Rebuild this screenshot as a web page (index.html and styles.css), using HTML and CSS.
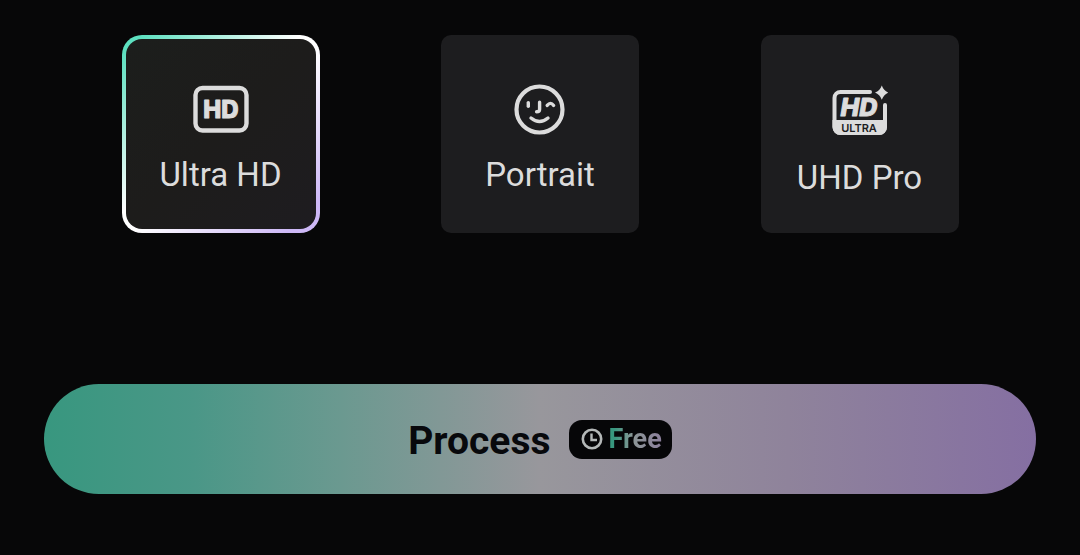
FILE: index.html
```html
<!DOCTYPE html>
<html lang="en">
<head>
    <meta charset="UTF-8">
    <meta name="viewport" content="width=device-width, initial-scale=1.0">
    <title>Enhance photo</title>
    <link rel="stylesheet" href="styles.css">
</head>
<body>
    <main class="panel">
        <div class="modes" role="group" aria-label="Enhance mode">
            <button class="mode selected" type="button" aria-pressed="true">
                <svg class="mode-icon" width="56" height="56" viewBox="0 0 56 56" aria-hidden="true">
                    <rect x="2.5" y="7" width="51" height="42.5" rx="7" fill="none" stroke="currentColor" stroke-width="4.4"/>
                    <text class="hd-text" x="28" y="37" text-anchor="middle">HD</text>
                </svg>
                <span class="mode-label">Ultra HD</span>
            </button>

            <button class="mode" type="button" aria-pressed="false">
                <svg class="mode-icon" width="56" height="56" viewBox="0 0 56 56" fill="none" stroke="currentColor" stroke-linecap="round" aria-hidden="true">
                    <circle cx="27.5" cy="28.5" r="23" stroke-width="4.2"/>
                    <g stroke-width="3.4">
                        <path d="M16.3 21.6v3.6"/>
                        <path d="M27.6 21.2v7q0 2.6-3 2.6"/>
                        <path d="M35.2 24.4q3.4-4 6.4 0"/>
                        <path d="M19 37q8.5 7 17 0"/>
                    </g>
                </svg>
                <span class="mode-label">Portrait</span>
            </button>

            <button class="mode" type="button" aria-pressed="false">
                <svg class="mode-icon" width="56" height="59" viewBox="0 0 56 59" aria-hidden="true">
                    <path d="M38 11H8.500a6 6 0 0 0-6 6V46a6 6 0 0 0 6 6H47a6 6 0 0 0 6-6V24" fill="none" stroke="currentColor" stroke-width="4" stroke-linecap="round"/>
                    <path d="M0.5 39H55V46a8 8 0 0 1-8 8H8.5a8 8 0 0 1-8-8z" fill="currentColor"/>
                    <path d="M49.8 4.5Q51.800 10 56.500 11.600Q51.800 13.400 49.800 18.800Q47.800 13.400 43 11.600Q47.800 10 49.800 4.500z" fill="currentColor"/>
                    <text text-anchor="middle">
                        <tspan class="hd-text hd-italic" x="27" y="35">HD</tspan><tspan class="ultra-text" x="27" y="51">ULTRA</tspan>
                    </text>
                </svg>
                <span class="mode-label">UHD Pro</span>
            </button>
        </div>

        <button class="process-btn" type="button">
            <span class="process-text">Process</span>
            <span class="badge">
                <svg width="22" height="22" viewBox="0 0 22 22" fill="none" stroke="currentColor" aria-hidden="true">
                    <circle cx="11" cy="11" r="9.2" stroke-width="2.6"/>
                    <path d="M10.5 5.5V12H16" stroke-width="2.4"/>
                </svg>
                <span class="badge-text">Free</span>
            </span>
        </button>
    </main>
</body>
</html>
```

FILE: styles.css
```css
* {
    box-sizing: border-box;
}

body {
    font-family: Roboto, "Liberation Sans", sans-serif;
    margin: 0;
    min-height: 100vh;
    background: #070708;
    color: #dcdcdc;
}

button {
    font-family: inherit;
    cursor: pointer;
}

.panel {
    padding: 35px 44px 61px;
}

.modes {
    display: flex;
    justify-content: space-evenly;
    margin: 0 -44px 151px;
}

.mode {
    display: flex;
    flex-direction: column;
    align-items: center;
    gap: 18px;
    width: 198px;
    height: 198px;
    padding: 42px 0 0;
    border: 4px solid transparent;
    border-radius: 10px;
    background: #1d1d1f border-box;
    color: #dcdcdc;
}

/* gradient border around the active mode */
.mode.selected {
    border-radius: 20px;
    background:
        linear-gradient(135deg, #1c1e1c, #1d1c1b 50%, #1e1c20) padding-box,
        linear-gradient(135deg, #5de0c0 5%, #ffffff 45%, #ffffff 52%, #cdb8f6 92%) border-box;
}

.mode-icon {
    display: block;
    flex-shrink: 0;
}

.mode-label {
    font-size: 33px;
    line-height: 40px;
}

.hd-text {
    font-family: Inter, sans-serif;
    font-size: 24px;
    font-weight: 800;
    fill: currentColor;
    stroke: currentColor;
    stroke-width: 1px;
    stroke-linejoin: round;
}

.hd-italic {
    font-size: 25px;
    font-style: italic;
}

.ultra-text {
    font-family: Inter, sans-serif;
    font-size: 11px;
    font-weight: 600;
    fill: #1d1d1f;
}

.process-btn {
    display: flex;
    align-items: center;
    justify-content: center;
    gap: 18px;
    width: 100%;
    height: 110px;
    padding: 0;
    border: none;
    border-radius: 55px;
    background: linear-gradient(90deg, #38977f 0%, #4a9787 15%, #6b9990 30%, #98979c 50%, #8f839b 75%, #856fa2 100%);
    color: #08090c;
    font-size: 39px;
    font-weight: 700;
}

.process-text {
    padding-top: 3px;
}

.badge {
    display: flex;
    align-items: center;
    gap: 6px;
    height: 39px;
    padding: 0 10px 0 12px;
    border-radius: 13px;
    background: #060608;
    color: #b4b8b8;
    font-size: 27px;
}

.badge-text {
    background: linear-gradient(90deg, #38977f 10%, #8c9697 45%, #8c7f9c);
    background-clip: text;
    -webkit-background-clip: text;
    color: transparent;
}
```
